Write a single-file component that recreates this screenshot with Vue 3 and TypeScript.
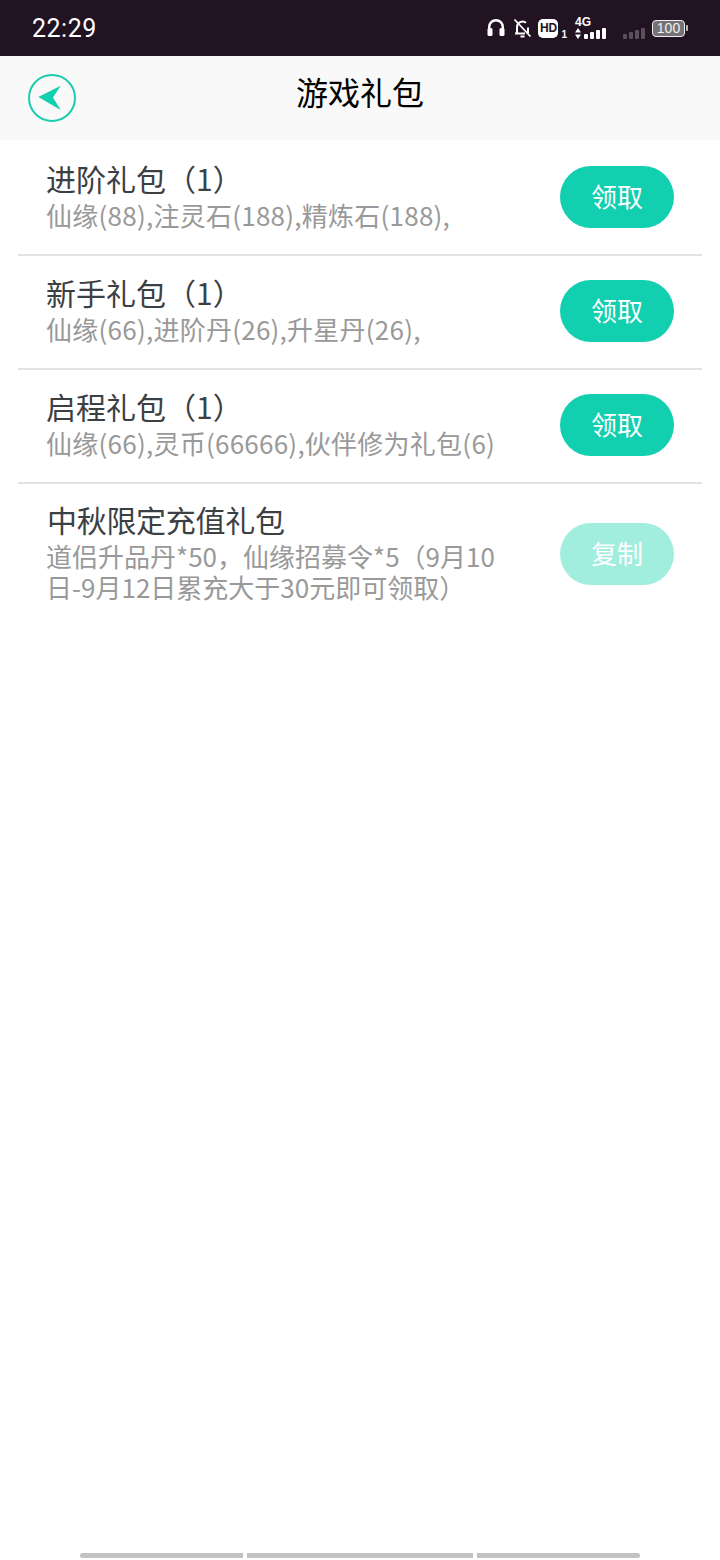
<script setup lang="ts">
interface Gift { title: string; desc: string; action: string; muted?: boolean }
const gifts: Gift[] = [
  { title: '进阶礼包（1）', desc: '仙缘(88),注灵石(188),精炼石(188),', action: '领取' },
  { title: '新手礼包（1）', desc: '仙缘(66),进阶丹(26),升星丹(26),', action: '领取' },
  { title: '启程礼包（1）', desc: '仙缘(66),灵币(66666),伙伴修为礼包(6)', action: '领取' },
  { title: '中秋限定充值礼包', desc: '道侣升品丹*50，仙缘招募令*5（9月10日-9月12日累充大于30元即可领取）', action: '复制', muted: true },
]
const weak = [0, 1, 2, 3]
const strong = [0, 1, 2, 3]
</script>

<template>
  <div class="page">
    <div class="status">
      <span class="time">22:29</span>
      <div class="icons">
        <svg class="i-head" width="18" height="20" viewBox="0 0 18 20">
          <path d="M2.2 13V9a6.800 6.800 0 0 1 13.600 0v4" fill="none" stroke="#fff" stroke-width="2.400" />
          <rect x="0.500" y="10" width="5" height="8" rx="1.500" fill="#fff" />
          <rect x="12.500" y="10" width="5" height="8" rx="1.500" fill="#fff" />
        </svg>
        <svg class="i-bell" width="19" height="20" viewBox="0 0 19 20">
          <path d="M4 15V9a5.500 5.500 0 0 1 9-4.200M15 9.500V15M2 15.500h10M7.500 18.500h4" fill="none" stroke="#fff" stroke-width="2" />
          <path d="M1.500 1.500 17.500 18.500" stroke="#fff" stroke-width="1.800" />
        </svg>
        <span class="hd">HD</span>
        <span class="sim">1</span>
        <div class="net">
          <span class="net-label">4G</span>
          <div class="net-row">
            <svg width="6" height="11" viewBox="0 0 6 11">
              <path d="M3 0 6 4.500H0ZM3 11 0 6.500h6Z" fill="#fff" />
            </svg>
            <span v-for="n in strong" :key="n" class="bar" :style="{ height: 5 + n * 2 + 'px' }"></span>
          </div>
        </div>
        <div class="weak">
          <span v-for="n in weak" :key="n" class="bar dim" :style="{ height: 5 + n * 2 + 'px' }"></span>
        </div>
        <div class="battery">
          <span class="cell">100</span>
          <span class="tip"></span>
        </div>
      </div>
    </div>

    <header class="nav">
      <svg class="back" width="50" height="50" viewBox="0 0 50 50">
        <circle cx="25" cy="25" r="23" fill="none" stroke="#1ccdb0" stroke-width="2" />
        <path d="M11.300 24 33.700 12.700 26 24.500 33.700 37Z" fill="#12cfb0" />
      </svg>
      <h1 class="nav-title">游戏礼包</h1>
    </header>

    <ul class="list">
      <li v-for="g in gifts" :key="g.title" class="row" :class="{ tall: g.muted }">
        <div class="text">
          <div class="title">{{ g.title }}</div>
          <div class="desc">{{ g.desc }}</div>
        </div>
        <button class="btn" :class="{ muted: g.muted }">{{ g.action }}</button>
      </li>
    </ul>

    <div class="spacer"></div>

    <div class="bottom">
      <span class="seg s1"></span>
      <span class="seg s2"></span>
      <span class="seg s3"></span>
    </div>
  </div>
</template>

<style>
html, body { margin: 0; background: #fff; }
</style>

<style scoped>
.page {
  width: 720px;
  height: 1560px;
  display: flex;
  flex-direction: column;
  background: #fff;
  font-family: "Noto Sans CJK SC", "Noto Sans", sans-serif;
  overflow: hidden;
}
.status {
  height: 56px;
  flex: none;
  background: #211321;
  display: flex;
  align-items: center;
  justify-content: space-between;
  padding: 0 32px;
  color: #fff;
}
.time { font-family: Roboto, sans-serif; font-size: 25px; letter-spacing: 0.5px; }
.icons { display: flex; align-items: center; height: 24px; }
.i-bell { margin-left: 8px; }
.hd {
  margin-left: 6px;
  width: 20px;
  height: 19px;
  border-radius: 5px;
  background: #fff;
  color: #211321;
  font: 700 12px/19px "Liberation Sans", sans-serif;
  letter-spacing: -0.3px;
  text-align: center;
}
.sim { font: 700 10px/10px "Liberation Sans", sans-serif; align-self: flex-end; margin: 0 0 0 3px; }
.net { margin-left: 8px; display: flex; flex-direction: column; width: 32px; }
.net-label { font: 700 12px/10px "Liberation Sans", sans-serif; }
.net-row { display: flex; align-items: flex-end; gap: 2px; height: 11px; margin-top: 1px; }
.net-row svg { margin-right: 1px; }
.bar { width: 4px; background: #fff; border-radius: 1px; display: block; }
.weak { margin-left: 16px; display: flex; align-items: flex-end; gap: 2px; height: 12px; align-self: flex-end; margin-bottom: 1px; }
.dim { background: #5a4f5a; }
.battery { margin-left: 7px; display: flex; align-items: center; }
.cell {
  box-sizing: border-box;
  width: 33px;
  height: 17px;
  border: 1.5px solid #eee;
  border-radius: 4px;
  background: #777277;
  color: #eee;
  font: 400 14px/14px "Liberation Sans", sans-serif;
  text-align: center;
}
.tip { width: 2px; height: 6px; background: #bbb; margin-left: 1px; border-radius: 0 1px 1px 0; }

.nav {
  height: 84px;
  flex: none;
  background: #f9f9f9;
  display: flex;
  align-items: flex-start;
  justify-content: center;
  position: relative;
}
.back { position: absolute; left: 27px; top: 17px; }
.nav-title {
  margin: 12px 0 0;
  font-size: 32px;
  font-weight: 400;
  line-height: 46px;
  color: #000;
}
.list { list-style: none; margin: 0; padding: 2px 18px 0; }
.row {
  box-sizing: border-box;
  height: 114px;
  border-bottom: 2px solid #e3e3e3;
  display: flex;
  align-items: center;
  justify-content: space-between;
  padding: 0 28px;
}
.row.tall { border-bottom: 0; height: 142px; }
.text { width: 454px; padding-bottom: 4px; }
.tall .text { padding-bottom: 7px; }
.title { font-size: 30px; line-height: 36px; color: #3c4043; }
.tall .title { margin-left: 1px; letter-spacing: -0.3px; }
.desc { font-size: 26px; line-height: 34px; color: #999; margin-top: 2px; letter-spacing: 0.25px; }
.tall .desc { line-height: 31px; margin-top: 3px; letter-spacing: 0; }
.btn {
  width: 114px;
  height: 62px;
  flex: none;
  border: 0;
  padding: 0 0 3px;
  border-radius: 31px;
  background: #12cfb0;
  color: #fff;
  font-family: inherit;
  font-size: 26px;
  margin-top: -2px;
}
.btn.muted { background: #a1edde; }
.spacer { flex: 1; }
.bottom { display: flex; gap: 4px; padding: 0 80px; height: 7px; flex: none; }
.seg { height: 5px; background: #c2c2c2; display: block; }
.s1 { width: 163px; border-radius: 3px 0 0 3px; }
.s2 { width: 226px; }
.s3 { width: 163px; border-radius: 0 3px 3px 0; }
</style>
